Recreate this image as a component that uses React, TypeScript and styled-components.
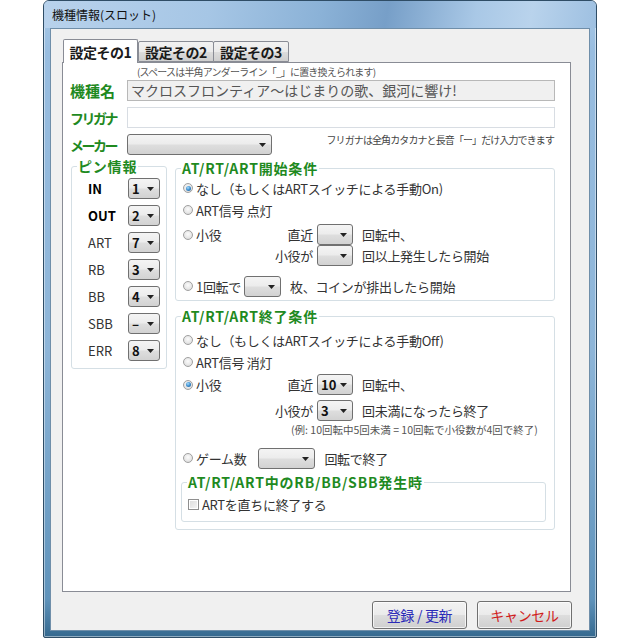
import React from "react";
import styled, { createGlobalStyle } from "styled-components";

const FONT = `"Noto Sans CJK JP", "Noto Sans", sans-serif`;
const GREEN = "#1f8a1f";

const Global = createGlobalStyle`
  html, body { margin: 0; padding: 0; background: #ffffff; }
  body { font-family: ${FONT}; font-size: 13px; color: #1a1a1a; }
  * { box-sizing: border-box; }
`;

const Page = styled.div`
  width: 640px;
  height: 640px;
  padding-left: 43px;
  background: #ffffff;
`;

const Window = styled.div`
  width: 554px;
  height: 638px;
  display: flex;
  flex-direction: column;
  border: 1px solid #2f4d66;
  border-radius: 6px 6px 2px 2px;
  padding: 0 6px 6px 6px;
  background: linear-gradient(180deg, #a9c9e6 0%, #98bde0 8%, #8db5d8 55%, #5f93bb 94%, #35698f 100%);
  box-shadow: inset 0 0 0 1px rgba(255, 255, 255, 0.45);
`;

const TitleBar = styled.div`
  height: 27px;
  display: flex;
  align-items: center;
  font-size: 12px;
  color: #111;
  background: linear-gradient(100deg, #b8d2ec 0%, #a6c6e5 30%, #8bb2d7 50%, #779fc8 62%, #a9c8e6 78%, #b9d3ec 88%, #9ec0e1 100%);
  margin: 0 -6px;
  padding-left: 8px;
  border-radius: 5px 5px 0 0;
`;

const Client = styled.div`
  flex: 1;
  background: #f0f0f0;
  border: 1px solid #6f8ea9;
  padding: 10px 18px 0 11px;
  display: flex;
  flex-direction: column;
`;

const TabRow = styled.div`
  display: flex;
  align-items: flex-end;
  height: 23px;
  padding-left: 1px;
`;

const Tab = styled.div<{ $active?: boolean }>`
  height: ${(p) => (p.$active ? "24px" : "21px")};
  margin-bottom: ${(p) => (p.$active ? "-1px" : "0")};
  margin-right: ${(p) => (p.$active ? "0" : "-1px")};
  width: ${(p) => (p.$active ? "75px" : "76px")};
  display: flex;
  align-items: center;
  justify-content: center;
  font-size: 14px;
  font-weight: bold;
  letter-spacing: -0.5px;
  border: 1px solid #898c95;
  border-bottom: ${(p) => (p.$active ? "none" : "1px solid #898c95")};
  border-radius: 2px 2px 0 0;
  background: ${(p) => (p.$active ? "#ffffff" : "linear-gradient(180deg, #f2f2f2 0%, #ebebeb 50%, #dddddd 51%, #cfcfcf 100%)")};
  position: relative;
  z-index: ${(p) => (p.$active ? 2 : 1)};
`;

const Panel = styled.div`
  width: 509px;
  height: 530px;
  background: #ffffff;
  border: 1px solid #898c95;
  padding: 2px 0 0 0;
`;

const TopHint = styled.div`
  font-size: 10px;
  line-height: 14px;
  color: #555;
  padding-left: 74px;
  letter-spacing: -0.8px;
`;

const FormRow = styled.div<{ $gap: number }>`
  display: flex;
  align-items: center;
  margin-top: ${(p) => p.$gap}px;
  padding-left: 7px;
`;

const FieldLabel = styled.div<{ $tight?: boolean }>`
  width: 57px;
  color: ${GREEN};
  font-weight: bold;
  font-size: ${(p) => (p.$tight ? "14px" : "15px")};
  letter-spacing: ${(p) => (p.$tight ? "-2.5px" : "0")};
  line-height: 20px;
  white-space: nowrap;
`;

const TextBox = styled.div<{ $disabled?: boolean }>`
  width: 428px;
  height: 21px;
  border: 1px solid ${(p) => (p.$disabled ? "#b8b8b8" : "#d8dde3")};
  background: ${(p) => (p.$disabled ? "#f0f0f0" : "#ffffff")};
  color: #555;
  font-size: 14px;
  line-height: 19px;
  padding-left: 3px;
  white-space: nowrap;
  overflow: hidden;
`;

const MakerHint = styled.div`
  font-size: 10px;
  color: #444;
  margin-left: auto;
  margin-right: 16px;
  align-self: flex-start;
  margin-top: -2px;
  letter-spacing: -0.9px;
`;

const Combo = styled.div<{ $w: number; $bold?: boolean }>`
  width: ${(p) => p.$w}px;
  height: 21px;
  flex: none;
  display: flex;
  align-items: center;
  padding-left: 3px;
  border: 1px solid #707070;
  border-radius: 3px;
  background: linear-gradient(180deg, #f4f4f4 0%, #ececec 48%, #dedede 52%, #d2d2d2 100%);
  font-size: 13px;
  font-weight: ${(p) => (p.$bold ? "bold" : "normal")};
  color: #111;
  position: relative;
`;

const ComboArrow = styled.svg`
  position: absolute;
  right: 5px;
  top: 8px;
`;

const Lower = styled.div`
  display: flex;
  align-items: flex-start;
  gap: 8px;
  padding-left: 8px;
  margin-top: 3px;
`;

const Group = styled.fieldset<{ $w: number; $h: number }>`
  margin: 0;
  min-width: 0;
  width: ${(p) => p.$w}px;
  height: ${(p) => p.$h}px;
  border: 1px solid #d5dfe5;
  border-radius: 3px;
  padding: 0 4px 0 5px;
`;

const Legend = styled.legend`
  color: ${GREEN};
  font-weight: bold;
  font-size: 14px;
  line-height: 16px;
  padding: 0 1px;
  margin-left: 0;
  letter-spacing: 0.8px;
`;

const PinList = styled.div`
  display: flex;
  flex-direction: column;
  gap: 6px;
  padding: 4px 0 0 11px;
`;

const PinRow = styled.div`
  display: flex;
  align-items: center;
`;

const PinLabel = styled.div<{ $bold?: boolean }>`
  width: 40px;
  font-size: 13px;
  font-weight: ${(p) => (p.$bold ? "bold" : "normal")};
  color: ${(p) => (p.$bold ? "#000" : "#333")};
`;

const Right = styled.div`
  display: flex;
  flex-direction: column;
  gap: 7px;
  margin-top: 2px;
`;

const OptRow = styled.div<{ $mt?: number }>`
  display: flex;
  align-items: center;
  height: 22px;
  margin-top: ${(p) => p.$mt ?? 0}px;
  white-space: nowrap;
`;

const Radio = styled.span<{ $on?: boolean }>`
  width: 10px;
  height: 10px;
  flex: none;
  border-radius: 50%;
  border: 1px solid #a0a0a0;
  background: radial-gradient(circle at 50% 40%, #fbfbfb 0%, #e6e6e6 60%, #cfcfcf 100%);
  margin: 0 3px 0 2px;
  display: flex;
  align-items: center;
  justify-content: center;
  &::after {
    content: "";
    display: ${(p) => (p.$on ? "block" : "none")};
    width: 5px;
    height: 5px;
    border-radius: 50%;
    background: radial-gradient(circle at 40% 35%, #a9dcfb 0%, #3d8fd0 50%, #1c568c 100%);
  }
`;

const Check = styled.span`
  width: 11px;
  height: 11px;
  flex: none;
  border: 1px solid #8f8f8f;
  background: linear-gradient(135deg, #dcdcdc 0%, #f6f6f6 100%);
  box-shadow: inset 0 0 0 1px #ffffff;
  margin: 0 3px 0 1px;
`;

const Text = styled.span<{ $ml?: number }>`
  font-size: 13px;
  color: #333;
  margin-left: ${(p) => p.$ml ?? 0}px;
  letter-spacing: -0.3px;
  white-space: nowrap;
`;

const SubGrid = styled.div<{ $mt: number; $rowGap: number }>`
  display: grid;
  grid-template-columns: 86px 50px 36px auto;
  grid-auto-rows: 21px;
  row-gap: ${(p) => p.$rowGap}px;
  align-items: center;
  margin-top: ${(p) => p.$mt}px;
`;

const Cell = styled.div`
  display: flex;
  align-items: center;
  white-space: nowrap;
`;

const RightCell = styled(Cell)`
  justify-content: flex-end;
  padding-right: 4px;
`;

const AfterCell = styled(Cell)`
  padding-left: 9px;
`;

const Example = styled.div`
  font-size: 10.5px;
  line-height: 13px;
  color: #555;
  padding-left: 110px;
  margin-top: 2px;
  letter-spacing: 0;
  white-space: nowrap;
`;

const SubGroup = styled.fieldset`
  margin: 5px 4px 0 0;
  min-width: 0;
  height: 48px;
  border: 1px solid #d5dfe5;
  border-radius: 3px;
  padding: 3px 4px 0 5px;
`;

const Buttons = styled.div`
  display: flex;
  justify-content: flex-end;
  gap: 10px;
  margin-top: 9px;
  margin-right: -1px;
`;

const Button = styled.div<{ $color: string }>`
  width: 95px;
  height: 28px;
  display: flex;
  align-items: center;
  justify-content: center;
  border: 1px solid #707070;
  border-radius: 3px;
  background: linear-gradient(180deg, #f2f2f2 0%, #ebebeb 48%, #dddddd 52%, #cfcfcf 100%);
  box-shadow: inset 0 0 0 1px rgba(255, 255, 255, 0.7);
  color: ${(p) => p.$color};
  font-size: 14px;
  letter-spacing: -0.3px;
`;

function Select({ w, value, bold }: { w: number; value?: string; bold?: boolean }) {
  return (
    <Combo $w={w} $bold={bold}>
      {value}
      <ComboArrow width="7" height="4" viewBox="0 0 7 4">
        <path d="M0 0h7L3.5 4z" fill="#222" />
      </ComboArrow>
    </Combo>
  );
}

const PINS: { label: string; value: string; bold?: boolean }[] = [
  { label: "IN", value: "1", bold: true },
  { label: "OUT", value: "2", bold: true },
  { label: "ART", value: "7" },
  { label: "RB", value: "3" },
  { label: "BB", value: "4" },
  { label: "SBB", value: "–" },
  { label: "ERR", value: "8" },
];

export default function App() {
  return (
    <Page>
      <Global />
      <Window>
        <TitleBar>機種情報(スロット)</TitleBar>
        <Client>
          <TabRow>
            <Tab $active>設定その1</Tab>
            <Tab>設定その2</Tab>
            <Tab>設定その3</Tab>
          </TabRow>
          <Panel>
            <TopHint>(スペースは半角アンダーライン「_」に置き換えられます)</TopHint>
            <FormRow $gap={1}>
              <FieldLabel>機種名</FieldLabel>
              <TextBox $disabled>マクロスフロンティア〜はじまりの歌、銀河に響け!</TextBox>
            </FormRow>
            <FormRow $gap={6}>
              <FieldLabel $tight>フリガナ</FieldLabel>
              <TextBox />
            </FormRow>
            <FormRow $gap={6}>
              <FieldLabel $tight>メーカー</FieldLabel>
              <Select w={145} />
              <MakerHint>フリガナは全角カタカナと長音「ー」だけ入力できます</MakerHint>
            </FormRow>

            <Lower>
              <Group $w={96} $h={211}>
                <Legend>ピン情報</Legend>
                <PinList>
                  {PINS.map((p) => (
                    <PinRow key={p.label}>
                      <PinLabel $bold={p.bold}>{p.label}</PinLabel>
                      <Select w={32} value={p.value} bold />
                    </PinRow>
                  ))}
                </PinList>
              </Group>

              <Right>
                <Group $w={380} $h={141}>
                  <Legend>AT/RT/ART開始条件</Legend>
                  <OptRow $mt={1}>
                    <Radio $on />
                    <Text>なし（もしくはARTスイッチによる手動On)</Text>
                  </OptRow>
                  <OptRow>
                    <Radio />
                    <Text>ART信号 点灯</Text>
                  </OptRow>
                  <SubGrid $mt={3} $rowGap={0}>
                    <Cell>
                      <Radio />
                      <Text>小役</Text>
                    </Cell>
                    <RightCell>
                      <Text>直近</Text>
                    </RightCell>
                    <Select w={36} />
                    <AfterCell>
                      <Text>回転中、</Text>
                    </AfterCell>
                    <Cell />
                    <RightCell>
                      <Text>小役が</Text>
                    </RightCell>
                    <Select w={36} />
                    <AfterCell>
                      <Text>回以上発生したら開始</Text>
                    </AfterCell>
                  </SubGrid>
                  <OptRow $mt={9}>
                    <Radio />
                    <Text>1回転で</Text>
                    <Text $ml={3}>
                      <Select w={37} />
                    </Text>
                    <Text $ml={9}>枚、コインが排出したら開始</Text>
                  </OptRow>
                </Group>

                <Group $w={380} $h={222}>
                  <Legend>AT/RT/ART終了条件</Legend>
                  <OptRow $mt={5}>
                    <Radio />
                    <Text>なし（もしくはARTスイッチによる手動Off)</Text>
                  </OptRow>
                  <OptRow>
                    <Radio />
                    <Text>ART信号 消灯</Text>
                  </OptRow>
                  <SubGrid $mt={1} $rowGap={5}>
                    <Cell>
                      <Radio $on />
                      <Text>小役</Text>
                    </Cell>
                    <RightCell>
                      <Text>直近</Text>
                    </RightCell>
                    <Select w={36} value="10" bold />
                    <AfterCell>
                      <Text>回転中、</Text>
                    </AfterCell>
                    <Cell />
                    <RightCell>
                      <Text>小役が</Text>
                    </RightCell>
                    <Select w={36} value="3" bold />
                    <AfterCell>
                      <Text>回未満になったら終了</Text>
                    </AfterCell>
                  </SubGrid>
                  <Example>(例: 10回転中5回未満 = 10回転で小役数が4回で終了)</Example>
                  <OptRow $mt={11}>
                    <Radio />
                    <Text>ゲーム数</Text>
                    <Text $ml={12}>
                      <Select w={57} />
                    </Text>
                    <Text $ml={9}>回転で終了</Text>
                  </OptRow>
                  <SubGroup>
                    <Legend>AT/RT/ART中のRB/BB/SBB発生時</Legend>
                    <OptRow>
                      <Check />
                      <Text>ARTを直ちに終了する</Text>
                    </OptRow>
                  </SubGroup>
                </Group>
              </Right>
            </Lower>
          </Panel>
          <Buttons>
            <Button $color="#2a2ab8">登録 / 更新</Button>
            <Button $color="#d01c1c">キャンセル</Button>
          </Buttons>
        </Client>
      </Window>
    </Page>
  );
}
